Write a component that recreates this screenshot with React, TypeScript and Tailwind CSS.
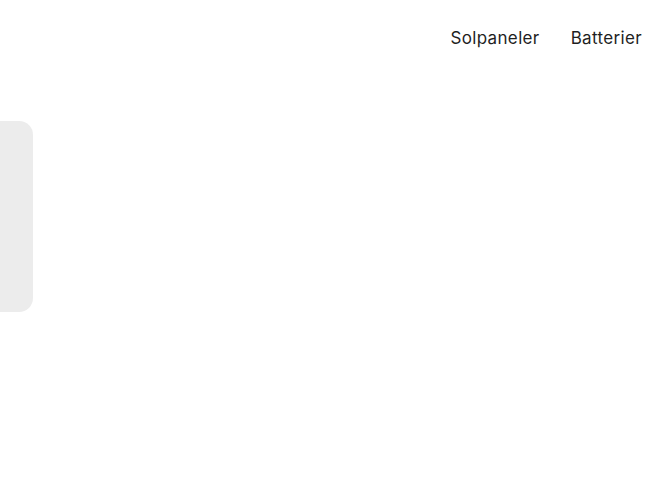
export default function App() {
	return (
		<div className="w-[650px] h-[500px] bg-white overflow-hidden" style={{ fontFamily: "Inter, 'Open Sans', sans-serif" }}>
			<header className="flex justify-end items-center gap-[31px] pr-[8px] pt-[26px] h-[50px]">
				<a className="text-[17px] text-[#1f1f1f] leading-none tracking-[0.35px]">Solpaneler</a>
				<a className="text-[17px] text-[#1f1f1f] leading-none tracking-[0.35px]">Batterier</a>
			</header>
			<div className="mt-[71px] w-[33px] h-[191px] rounded-r-[14px] bg-[#ececec]" />
		</div>
	);
}
